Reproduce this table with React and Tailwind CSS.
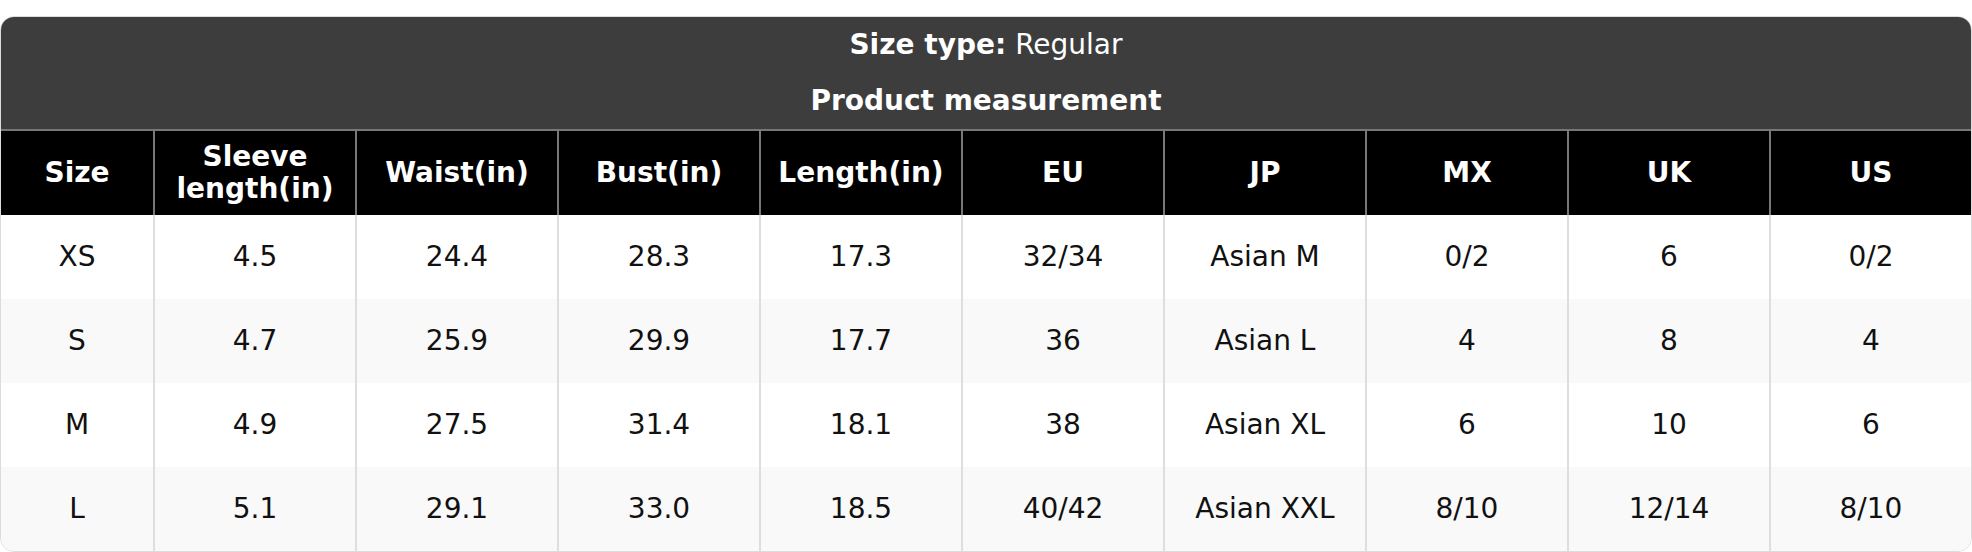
import React from "react";

const headers = ["Size", "Sleeve\nlength(in)", "Waist(in)", "Bust(in)", "Length(in)", "EU", "JP", "MX", "UK", "US"];
const rows = [
  ["XS", "4.5", "24.4", "28.3", "17.3", "32/34", "Asian M", "0/2", "6", "0/2"],
  ["S", "4.7", "25.9", "29.9", "17.7", "36", "Asian L", "4", "8", "4"],
  ["M", "4.9", "27.5", "31.4", "18.1", "38", "Asian XL", "6", "10", "6"],
  ["L", "5.1", "29.1", "33.0", "18.5", "40/42", "Asian XXL", "8/10", "12/14", "8/10"],
];

export default function App() {
  return (
    <div className="w-[1972px] h-[552px] bg-white pt-[16px]" style={{ fontFamily: '"DejaVu Sans", sans-serif' }}>
      <div className="rounded-[14px] border border-[#dcdcdc] overflow-hidden text-[28px]">
        <div className="bg-[#3d3d3d] text-white">
          <div className="h-[56px] flex items-center justify-center">
            <span className="font-bold">Size type:</span>
            <span className="ml-[9px]">Regular</span>
          </div>
          <div className="h-[56px] flex items-center justify-center font-bold">Product measurement</div>
        </div>
        <div className="grid grid-cols-[152px_repeat(9,minmax(0,1fr))] bg-black text-white font-bold border-t-2 border-[#777]">
          {headers.map((h, i) => (
            <div
              key={i}
              className={`h-[84px] flex items-center justify-center text-center leading-[32px] whitespace-pre-line ${i > 0 ? "border-l-2 border-[#777]" : ""}`}
            >
              {h}
            </div>
          ))}
        </div>
        {rows.map((r, ri) => (
          <div
            key={ri}
            className={`grid grid-cols-[152px_repeat(9,minmax(0,1fr))] text-[#111] ${ri % 2 === 1 ? "bg-[#f9f9f9]" : "bg-white"}`}
          >
            {r.map((c, ci) => (
              <div
                key={ci}
                className={`h-[84px] flex items-center justify-center ${ci > 0 ? "border-l-2 border-[#dedede]" : ""}`}
              >
                {c}
              </div>
            ))}
          </div>
        ))}
      </div>
    </div>
  );
}
